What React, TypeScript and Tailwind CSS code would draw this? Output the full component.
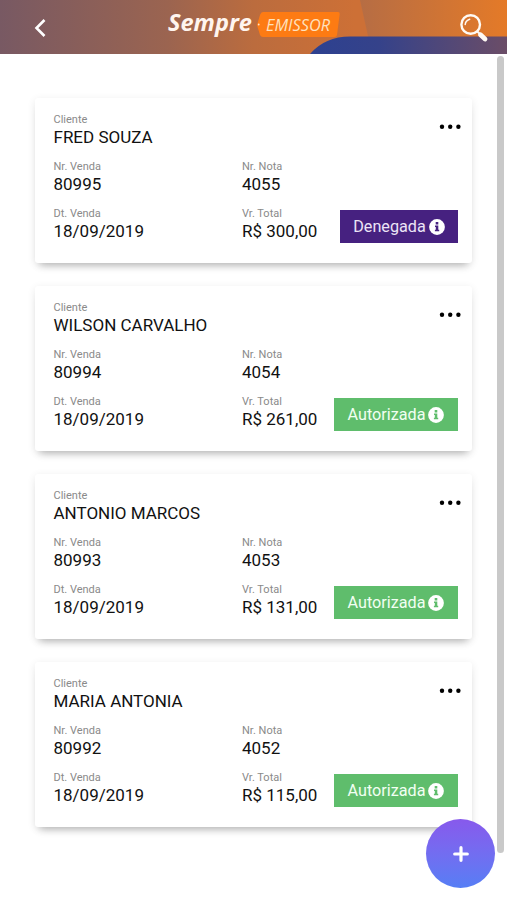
import React from "react";

type Sale = { client: string; sale: string; invoice: string; date: string; total: string; status: "Denegada" | "Autorizada" };

const sales: Sale[] = [
  { client: "FRED SOUZA", sale: "80995", invoice: "4055", date: "18/09/2019", total: "R$ 300,00", status: "Denegada" },
  { client: "WILSON CARVALHO", sale: "80994", invoice: "4054", date: "18/09/2019", total: "R$ 261,00", status: "Autorizada" },
  { client: "ANTONIO MARCOS", sale: "80993", invoice: "4053", date: "18/09/2019", total: "R$ 131,00", status: "Autorizada" },
  { client: "MARIA ANTONIA", sale: "80992", invoice: "4052", date: "18/09/2019", total: "R$ 115,00", status: "Autorizada" },
];

function Field({ label, value }: { label: string; value: string }) {
  return (
    <div className="h-[47px] whitespace-nowrap">
      <div className="h-4 text-[11px] leading-[17px] text-[#8a8a8a]">{label}</div>
      <div className="h-5 text-[17px] leading-5 text-[#111]">{value}</div>
    </div>
  );
}

function InfoIcon() {
  return (
    <svg width="16" height="16" viewBox="0 0 16 16" className="shrink-0">
      <circle cx="8" cy="8" r="7.9" fill="white" />
      <path d="M6.7 3.1h2.6v2.3H6.7zM6 6.5h3.3v4.3h.9v1.4H5.9v-1.4h.9V7.9H6z" fill="currentColor" />
    </svg>
  );
}

function SaleCard({ sale }: { sale: Sale }) {
  const denied = sale.status === "Denegada";
  return (
    <article className="flex h-[165px] rounded-[3px] bg-white pl-[18.5px] pt-[13px] pr-[14px] shadow-[0_7px_8px_-5px_rgba(0,0,0,0.26),0_2px_8px_rgba(0,0,0,0.09)]">
      <div className="w-[188.5px] shrink-0">
        <Field label="Cliente" value={sale.client} />
        <Field label="Nr. Venda" value={sale.sale} />
        <Field label="Dt. Venda" value={sale.date} />
      </div>
      <div className="w-[80px] shrink-0 pt-[47px]">
        <Field label="Nr. Nota" value={sale.invoice} />
        <Field label="Vr. Total" value={sale.total} />
      </div>
      <div className="flex flex-1 flex-col items-end justify-between pb-5">
        <button aria-label="Mais opções" className="-mr-[3px] mt-[13px]">
          <svg width="22" height="6" viewBox="0 0 22 6" className="block">
            <circle cx="3" cy="2.8" r="2.2" />
            <circle cx="11.2" cy="2.8" r="2.2" />
            <circle cx="19.4" cy="2.8" r="2.2" />
          </svg>
        </button>
        <button className={"flex h-[33px] shrink-0 items-center justify-center gap-[3px] text-[16.2px] leading-5 " + (denied ? "w-[118px] bg-[#462180] text-[#462180]" : "w-[124px] bg-[#5fbd6c] text-[#5fbd6c]")}>
          <span className={denied ? "text-[#ece4f6]" : "text-[#f1fff2]"}>{sale.status}</span>
          <InfoIcon />
        </button>
      </div>
    </article>
  );
}

function Header() {
  return (
    <header className="h-[54px]">
      <svg width="507" height="54" viewBox="0 0 507 54" className="block">
        <defs>
          <linearGradient id="bar" x1="0" y1="0" x2="1" y2="0">
            <stop offset="0" stopColor="#785963" />
            <stop offset=".33" stopColor="#9b6450" />
            <stop offset=".5" stopColor="#bb6c3e" />
            <stop offset=".7" stopColor="#cd7036" />
            <stop offset="1" stopColor="#cd7036" />
          </linearGradient>
          <linearGradient id="panel" x1="0" y1="0" x2="1" y2="0">
            <stop offset="0" stopColor="#b66d44" />
            <stop offset="1" stopColor="#e47a28" />
          </linearGradient>
          <linearGradient id="wave" x1="0" y1="0" x2="1" y2="0">
            <stop offset="0" stopColor="#2d4190" />
            <stop offset=".35" stopColor="#35428a" />
            <stop offset="1" stopColor="#6b4d67" />
          </linearGradient>
        </defs>
        <rect width="507" height="54" fill="url(#bar)" />
        <path d="M360 0H507V54H372Z" fill="url(#panel)" />
        <path d="M310 54Q325 36.5 350 36.5H507V54Z" fill="url(#wave)" />
        <path d="M44.5 20L36.5 28L44.5 36" fill="none" stroke="white" strokeWidth="2.6" />
        <text x="168" y="31" fill="#fff5ef" fontFamily="'Open Sans', sans-serif" fontSize="24" fontWeight="700" fontStyle="italic" textLength="84" lengthAdjust="spacingAndGlyphs">Sempre</text>
        <path d="M263 12H338Q340 12 339.7 14L337 35Q336.7 37 334.5 37H263Q261 37 260 35L257 25L260 15Q261 12 263 12Z" fill="#fd7b13" />
        <circle cx="258.7" cy="24.5" r=".9" fill="#ffe4c8" />
        <text x="266" y="31" fill="#ffe1bd" fontFamily="'Open Sans', sans-serif" fontSize="16.5" fontWeight="400" fontStyle="italic" textLength="64" lengthAdjust="spacingAndGlyphs">EMISSOR</text>
        <circle cx="470.7" cy="24.5" r="9.3" fill="none" stroke="#fffaf4" strokeWidth="2.4" />
        <path d="M465.2 24.5Q465.6 20.4 469.7 19.2" fill="none" stroke="#fffaf4" strokeWidth="1.5" strokeLinecap="round" />
        <path d="M477 31.2L480 34" stroke="#fffaf4" strokeWidth="2" />
        <path d="M480.5 34.8L485 39" stroke="#fffaf4" strokeWidth="4.8" strokeLinecap="round" />
      </svg>
    </header>
  );
}

export default function App() {
  return (
    <div className="relative h-[900px] w-[507px] overflow-hidden bg-white font-[Roboto,sans-serif]">
      <Header />
      <main className="flex justify-between">
        <div className="ml-[35px] mt-11 flex w-[437px] flex-col gap-[23px]">
          {sales.map((sale) => <SaleCard key={sale.sale} sale={sale} />)}
        </div>
        <div className="mr-[3px] mt-[2px] h-[797px] w-[7px] rounded-full bg-[#c9c9c9]" />
      </main>
      <button aria-label="Adicionar" className="absolute left-[426px] top-[819px] flex size-[69px] items-center justify-center rounded-full bg-linear-to-b from-[#8759ec] to-[#557ef5]">
        <svg width="18" height="18" viewBox="0 0 18 18" fill="none" stroke="white" strokeWidth="3.2" strokeLinecap="round"><path d="M9 2.7V15.3M2.7 9H15.3" /></svg>
      </button>
    </div>
  );
}
